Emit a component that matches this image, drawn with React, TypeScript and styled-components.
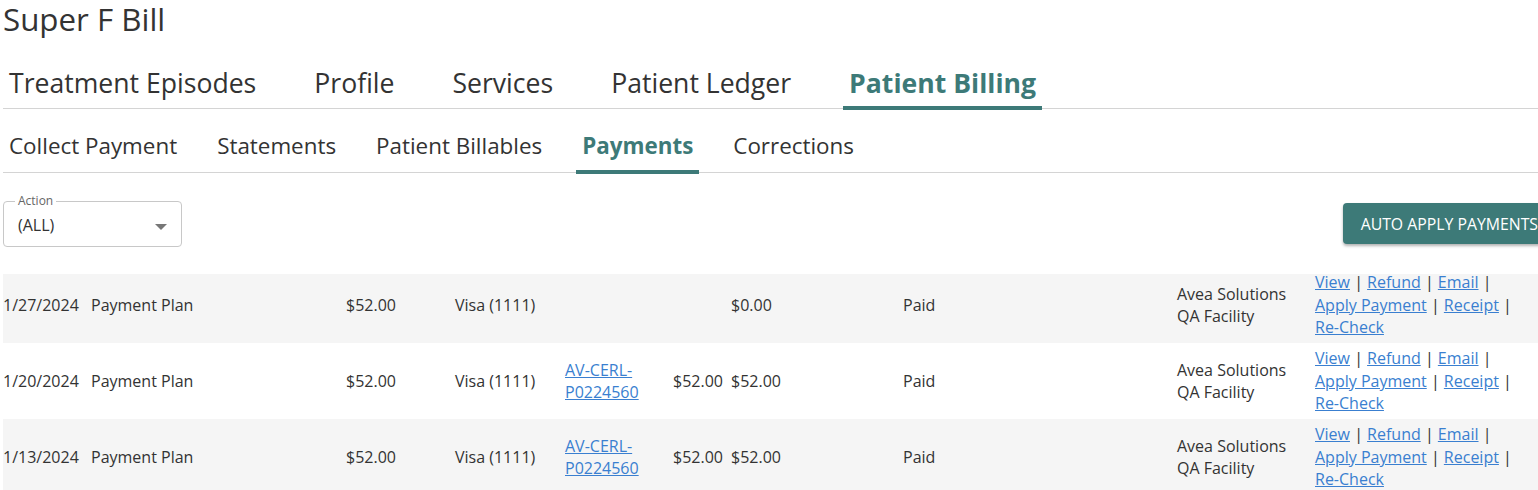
import React from "react";
import styled, { createGlobalStyle } from "styled-components";

const Global = createGlobalStyle`
  html, body { margin: 0; padding: 0; background: #fff; overflow: hidden; }
  body { font-family: "Open Sans", "Noto Sans", sans-serif; color: #333; }
  * { box-sizing: border-box; }
`;

const TEAL = "#3d7a78";
const LINK = "#3a7fd0";

const Page = styled.div`
  width: 1556px;
  padding: 0 0 0 3px;
`;

const Title = styled.h1`
  margin: 0;
  padding-top: 1px;
  font-size: 31.3px;
  font-weight: 400;
  line-height: 36px;
  color: #333;
`;

const TabBar = styled.nav<{ $size: number; $gap: number }>`
  display: flex;
  gap: ${(p) => p.$gap}px;
  border-bottom: 1px solid #d4d4d4;
  font-size: ${(p) => p.$size}px;
`;

const Tab = styled.div<{ $active?: boolean; $h: number; $offset: number }>`
  padding: ${(p) => p.$offset}px 6px 0;
  height: ${(p) => p.$h}px;
  display: flex;
  align-items: center;
  margin-bottom: -2px;
  border-bottom: 4px solid ${(p) => (p.$active ? TEAL : "transparent")};
  color: ${(p) => (p.$active ? TEAL : "#333")};
  font-weight: ${(p) => (p.$active ? 700 : 400)};
  white-space: nowrap;
`;

const TopTabs = styled(TabBar)`
  margin-top: 23px;
`;

const Toolbar = styled.div`
  display: flex;
  justify-content: space-between;
  align-items: flex-start;
  margin-top: 27px;
  height: 74px;
`;

const SelectBox = styled.fieldset`
  position: relative;
  width: 179px;
  height: 53px;
  margin: -6px 0 0 0;
  padding: 0 0 0 14px;
  border: 1px solid #c8c8c8;
  border-radius: 4px;
  display: flex;
  align-items: center;
`;

const Legend = styled.legend`
  font-size: 12px;
  color: #666;
  padding: 0 3px;
  margin-left: -3px;
  line-height: 14px;
`;

const SelectValue = styled.span`
  font-size: 16px;
  color: #333;
  margin-top: -5px;
`;

const Arrow = styled.span`
  position: absolute;
  right: 14px;
  top: 16px;
  width: 0;
  height: 0;
  border-left: 6px solid transparent;
  border-right: 6px solid transparent;
  border-top: 6px solid #777;
`;

const Button = styled.button`
  height: 41px;
  margin-top: 3px;
  padding: 0 18px;
  background: ${TEAL};
  color: #fff;
  border: none;
  border-radius: 4px;
  font-family: "Open Sans", sans-serif;
  font-size: 15.8px;
  box-shadow: 0 2px 3px rgba(0, 0, 0, 0.3);
  white-space: nowrap;
`;

const TableClip = styled.div`
  overflow: hidden;
`;

const Grid = styled.div`
  margin-top: -7px;
  display: grid;
  grid-template-columns: 88px 255px 109px 110px 108px 58px 172px 274px 138px 241px;
`;

const Row = styled.div<{ $shade: boolean }>`
  display: contents;
  & > * {
    background: ${(p) => (p.$shade ? "#f5f5f5" : "#fff")};
  }
`;

const Cell = styled.div<{ $pr?: number }>`
  font-family: "Open Sans", sans-serif;
  font-size: 16px;
  font-stretch: 97%;
  line-height: 22.5px;
  color: #333;
  padding: 4px ${(p) => p.$pr ?? 4}px 4px 0;
  min-height: 76px;
  display: flex;
  align-items: center;
`;

const CellText = styled.div``;

const A = styled.a`
  color: ${LINK};
  text-decoration: underline;
  cursor: pointer;
`;

const Sep = styled.span`
  color: #333;
`;

type R = {
  date: string;
  amount: string;
  ref?: string;
  applied?: string;
  balance: string;
};

const rows: R[] = [
  { date: "1/27/2024", amount: "$52.00", balance: "$0.00" },
  { date: "1/20/2024", amount: "$52.00", ref: "AV-CERL-P0224560", applied: "$52.00", balance: "$52.00" },
  { date: "1/13/2024", amount: "$52.00", ref: "AV-CERL-P0224560", applied: "$52.00", balance: "$52.00" },
];

const actions = ["View", "Refund", "Email", "Apply Payment", "Receipt", "Re-Check"];

export default function App() {
  return (
    <Page>
      <Global />
      <Title>Super F Bill</Title>
      <TopTabs $size={26.6} $gap={46}>
        {["Treatment Episodes", "Profile", "Services", "Patient Ledger", "Patient Billing"].map((t) => (
          <Tab key={t} $h={50} $offset={0} $active={t === "Patient Billing"}>
            {t}
          </Tab>
        ))}
      </TopTabs>
      <TabBar $size={22.4} $gap={28}>
        {["Collect Payment", "Statements", "Patient Billables", "Payments", "Corrections"].map((t) => (
          <Tab key={t} $h={65} $offset={12} $active={t === "Payments"}>
            {t}
          </Tab>
        ))}
      </TabBar>
      <Toolbar>
        <SelectBox>
          <Legend>Action</Legend>
          <SelectValue>(ALL)</SelectValue>
          <Arrow />
        </SelectBox>
        <Button>AUTO APPLY PAYMENTS</Button>
      </Toolbar>
      <TableClip>
        <Grid>
          {rows.map((r, i) => (
            <Row key={i} $shade={i % 2 === 0}>
              <Cell>{r.date}</Cell>
              <Cell>Payment Plan</Cell>
              <Cell>{r.amount}</Cell>
              <Cell>Visa (1111)</Cell>
              <Cell $pr={30}>
                <CellText>{r.ref && <A>{r.ref}</A>}</CellText>
              </Cell>
              <Cell>{r.applied ?? ""}</Cell>
              <Cell>{r.balance}</Cell>
              <Cell>Paid</Cell>
              <Cell $pr={12}>Avea Solutions QA Facility</Cell>
              <Cell $pr={30}>
                <CellText>
                  {actions.map((a, k) => (
                    <React.Fragment key={a}>
                      <A>{a}</A>
                      {k < actions.length - 1 && <Sep> | </Sep>}
                    </React.Fragment>
                  ))}
                </CellText>
              </Cell>
            </Row>
          ))}
        </Grid>
      </TableClip>
    </Page>
  );
}
